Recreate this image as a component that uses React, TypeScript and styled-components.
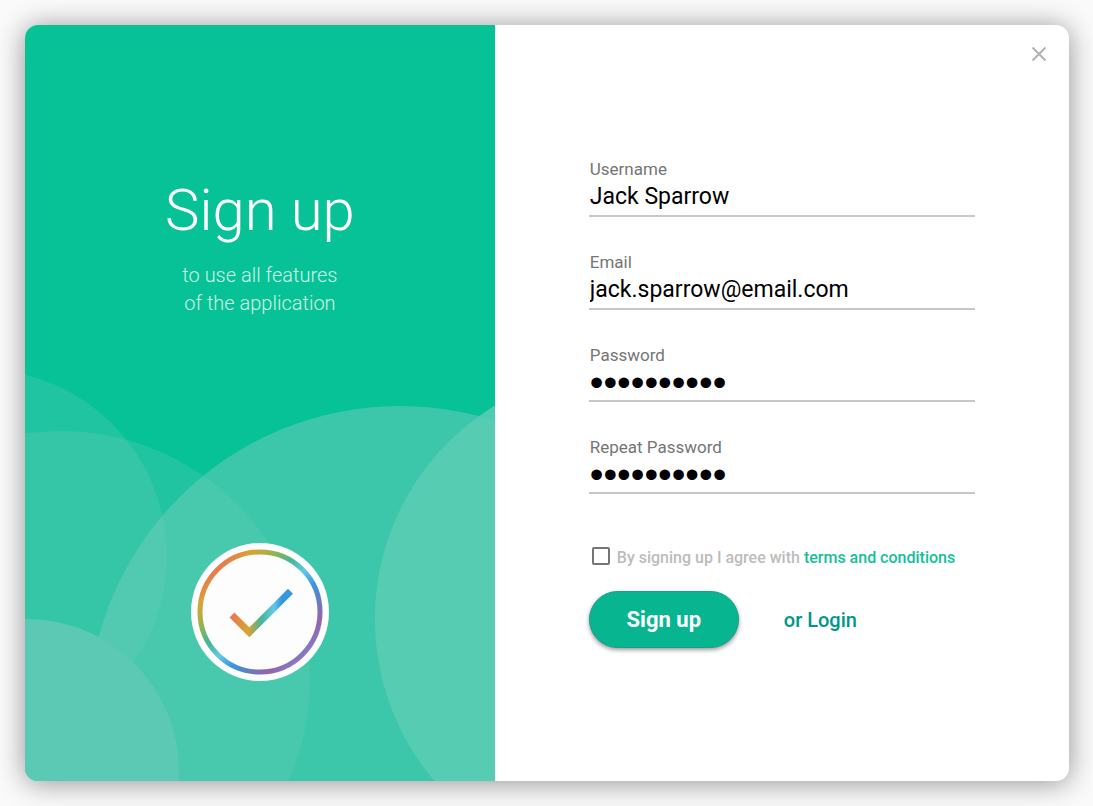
import React, { useState } from "react";
import styled, { createGlobalStyle } from "styled-components";

const GlobalStyle = createGlobalStyle`
  *, *::before, *::after { box-sizing: border-box; }
  body {
    margin: 0;
    background: #fafafa;
    font-family: Roboto, "Liberation Sans", sans-serif;
    color: #000;
  }
`;

const Page = styled.main`
  display: flex;
  min-height: 100vh;
  padding: 25px 24px 25px 25px;
`;

const Dialog = styled.section`
  display: grid;
  grid-template-columns: minmax(0, 45fr) minmax(0, 55fr);
  flex: 1;
  overflow: hidden;
  background: #fff;
  border-radius: 13px;
  box-shadow: 0 2px 28px rgba(0, 0, 0, 0.42);
`;

const Hero = styled.div`
  position: relative;
  display: flex;
  flex-direction: column;
  justify-content: space-between;
  align-items: center;
  padding: 150px 24px 100px;
  background: #07c197;
  color: #fff;
  text-align: center;
`;

const Backdrop = styled.svg`
  position: absolute;
  inset: 0;
  width: 100%;
  height: 100%;
`;

const HeroText = styled.div`
  position: relative;
`;

const Title = styled.h1`
  margin: 0 0 16px;
  font-size: 58px;
  line-height: 70px;
  font-weight: 300;
`;

const Subtitle = styled.p`
  margin: 0;
  font-size: 20px;
  line-height: 28px;
  font-weight: 300;
  color: rgba(255, 255, 255, 0.8);
`;

const Badge = styled.svg`
  position: relative;
  width: 138px;
  height: 138px;
`;

const Panel = styled.div`
  display: flex;
  flex-direction: column;
  padding: 16px 17px;
`;

const CloseButton = styled.button`
  display: grid;
  place-items: center;
  align-self: flex-end;
  width: 26px;
  height: 26px;
  padding: 0;
  border: 0;
  background: none;
  color: #b2b2b2;
  cursor: pointer;
`;

const Form = styled.form`
  display: flex;
  flex-direction: column;
  padding: 92px 77px 0;
`;

const Fields = styled.div`
  display: flex;
  flex-direction: column;
  gap: 35px;
`;

const Field = styled.div`
  display: flex;
  flex-direction: column;
`;

const Label = styled.label`
  padding-left: 1px;
  font-size: 17px;
  line-height: 20px;
  color: #757575;
`;

const Input = styled.input`
  width: 100%;
  height: 38px;
  padding: 0 1px 2px;
  border: 0;
  border-bottom: 2px solid #c4c8cc;
  border-radius: 0;
  outline: 0;
  background: none;
  color: #000;
  font: 400 23px Roboto, "Liberation Sans", sans-serif;

  &[type="password"] {
    height: 37px;
    padding-bottom: 0;
    font-family: "Liberation Sans", sans-serif;
    font-size: 39px;
  }
`;

const Terms = styled.div`
  display: flex;
  align-items: center;
  gap: 7px;
  margin-top: 50px;
  padding-left: 3px;
`;

const Checkbox = styled.input`
  flex: none;
  width: 18px;
  height: 18px;
  margin: 0;
  appearance: none;
  border: 2px solid #757575;
  border-radius: 2px;

  &:checked {
    background: #08b591;
  }
`;

const TermsText = styled.span`
  padding-top: 4px;
  font-size: 16px;
  line-height: 20px;
  font-weight: 500;
  color: #bcbcbc;
`;

const TermsLink = styled.a`
  color: #14c09a;
  text-decoration: none;
`;

const Actions = styled.div`
  display: flex;
  align-items: center;
  gap: 45px;
  margin-top: 23px;
`;

const SubmitButton = styled.button`
  width: 150px;
  height: 57px;
  padding: 0;
  border: 1px solid #199f88;
  border-radius: 29px;
  background: #08b591;
  box-shadow: 0 2px 4px rgba(0, 0, 0, 0.4);
  color: #fff;
  font: 700 22px Roboto, "Liberation Sans", sans-serif;
  cursor: pointer;
`;

const LoginLink = styled.a`
  font-size: 20px;
  line-height: 24px;
  font-weight: 500;
  color: #009688;
  text-decoration: none;
`;

const fields = [
  { id: "username", label: "Username", type: "text", value: "Jack Sparrow" },
  { id: "email", label: "Email", type: "email", value: "jack.sparrow@email.com" },
  { id: "password", label: "Password", type: "password", value: "blackpearl" },
  { id: "repeat", label: "Repeat Password", type: "password", value: "blackpearl" },
];

function Circles() {
  return (
    <Backdrop viewBox="0 0 470 756" preserveAspectRatio="xMidYMax slice" aria-hidden="true">
      <g fill="#6ecebb">
        <circle cx="-45" cy="531" r="187" fillOpacity="0.26" />
        <circle cx="36" cy="655" r="249" fillOpacity="0.26" />
        <circle cx="375" cy="693" r="312" fillOpacity="0.52" />
        <circle cx="600" cy="594" r="250" fill="#5accb4" fillOpacity="0.85" />
        <circle cx="2" cy="746" r="152" fill="#5bc9b3" />
      </g>
    </Backdrop>
  );
}

function CheckBadge() {
  return (
    <Badge viewBox="0 0 138 138" role="img" aria-label="Check mark">
      <defs>
        <linearGradient id="ring" gradientUnits="userSpaceOnUse" x1="26" y1="26" x2="112" y2="112">
          <stop offset="0" stopColor="#e27d50" />
          <stop offset="0.1" stopColor="#dba331" />
          <stop offset="0.24" stopColor="#93b352" />
          <stop offset="0.38" stopColor="#43b795" />
          <stop offset="0.52" stopColor="#62c8ea" />
          <stop offset="0.65" stopColor="#3698dc" />
          <stop offset="0.9" stopColor="#9464ac" />
          <stop offset="1" stopColor="#8678c6" />
        </linearGradient>
        <linearGradient id="tick" gradientUnits="userSpaceOnUse" x1="38" y1="0" x2="102" y2="0">
          <stop offset="0.06" stopColor="#e27d50" />
          <stop offset="0.3" stopColor="#dba331" />
          <stop offset="0.5" stopColor="#43b795" />
          <stop offset="0.7" stopColor="#62c8ea" />
          <stop offset="0.82" stopColor="#3698dc" />
        </linearGradient>
      </defs>
      <circle cx="69" cy="69" r="69" fill="#fdfdfd" />
      <circle cx="69" cy="69" r="60" fill="none" stroke="url(#ring)" strokeWidth="5" />
      <path d="M41 72L58.3 89.3L99.5 48.3" fill="none" stroke="url(#tick)" strokeWidth="7" />
    </Badge>
  );
}

export default function App() {
  const [values, setValues] = useState<Record<string, string>>(
    Object.fromEntries(fields.map((f) => [f.id, f.value]))
  );

  return (
    <>
      <GlobalStyle />
      <Page>
        <Dialog aria-label="Sign up">
          <Hero>
            <Circles />
            <HeroText>
              <Title>Sign up</Title>
              <Subtitle>
                to use all features
                <br />
                of the application
              </Subtitle>
            </HeroText>
            <CheckBadge />
          </Hero>
          <Panel>
            <CloseButton type="button" aria-label="Close">
              <svg width="16" height="16" viewBox="0 0 16 16" fill="none" stroke="currentColor" strokeWidth="2">
                <path d="M1.5 1.5L14.5 14.5M14.5 1.5L1.5 14.5" />
              </svg>
            </CloseButton>
            <Form onSubmit={(e) => e.preventDefault()}>
              <Fields>
                {fields.map((f) => (
                  <Field key={f.id}>
                    <Label htmlFor={f.id}>{f.label}</Label>
                    <Input
                      id={f.id}
                      type={f.type}
                      value={values[f.id]}
                      onChange={(e) => setValues({ ...values, [f.id]: e.target.value })}
                    />
                  </Field>
                ))}
              </Fields>
              <Terms>
                <Checkbox id="agree" type="checkbox" />
                <TermsText>
                  <label htmlFor="agree">By signing up I agree with</label>{" "}
                  <TermsLink href="#terms">terms and conditions</TermsLink>
                </TermsText>
              </Terms>
              <Actions>
                <SubmitButton type="submit">Sign up</SubmitButton>
                <LoginLink href="#login">or Login</LoginLink>
              </Actions>
            </Form>
          </Panel>
        </Dialog>
      </Page>
    </>
  );
}
